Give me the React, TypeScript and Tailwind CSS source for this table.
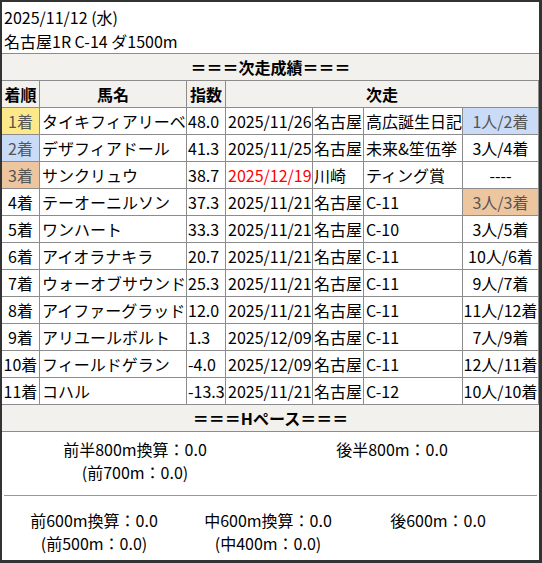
import React from "react";

type Row = {
  rank: string;
  rankBg?: string;
  name: string;
  score: string;
  date: string;
  dateRed?: boolean;
  venue: string;
  race: string;
  result: string;
  resultBg?: string;
};

const rows: Row[] = [
  { rank: "1着", rankBg: "bg-[#fde98a] text-[#555]", name: "タイキフィアリーベ", score: "48.0", date: "2025/11/26", venue: "名古屋", race: "高広誕生日記", result: "1人/2着", resultBg: "bg-[#c9dbf6] text-[#555]" },
  { rank: "2着", rankBg: "bg-[#c9dbf6] text-[#555]", name: "デザフィアドール", score: "41.3", date: "2025/11/25", venue: "名古屋", race: "未来&笙伍挙", result: "3人/4着" },
  { rank: "3着", rankBg: "bg-[#edc6a0] text-[#555]", name: "サンクリュウ", score: "38.7", date: "2025/12/19", dateRed: true, venue: "川崎", race: "ティング賞", result: "----" },
  { rank: "4着", name: "テーオーニルソン", score: "37.3", date: "2025/11/21", venue: "名古屋", race: "C-11", result: "3人/3着", resultBg: "bg-[#edc6a0] text-[#555]" },
  { rank: "5着", name: "ワンハート", score: "33.3", date: "2025/11/21", venue: "名古屋", race: "C-10", result: "3人/5着" },
  { rank: "6着", name: "アイオラナキラ", score: "20.7", date: "2025/11/21", venue: "名古屋", race: "C-11", result: "10人/6着" },
  { rank: "7着", name: "ウォーオブサウンド", score: "25.3", date: "2025/11/21", venue: "名古屋", race: "C-11", result: "9人/7着" },
  { rank: "8着", name: "アイファーグラッド", score: "12.0", date: "2025/11/21", venue: "名古屋", race: "C-11", result: "11人/12着" },
  { rank: "9着", name: "アリユールボルト", score: "1.3", date: "2025/12/09", venue: "名古屋", race: "C-11", result: "7人/9着" },
  { rank: "10着", name: "フィールドゲラン", score: "-4.0", date: "2025/12/09", venue: "名古屋", race: "C-11", result: "12人/11着" },
  { rank: "11着", name: "コハル", score: "-13.3", date: "2025/11/21", venue: "名古屋", race: "C-12", result: "10人/10着" },
];

const cell = "h-[26px] leading-[26px] whitespace-nowrap overflow-hidden";

export default function App() {
  return (
    <div
      className="w-[542px] h-[563px] bg-white border-l-2 border-t-2 border-r-[3px] border-b-[3px] border-[#333] text-[16px] text-black overflow-hidden"
      style={{ fontFamily: '"Noto Sans CJK JP", "Noto Sans", sans-serif' }}
    >
      <div className="h-[51px] pt-[3px] pl-[2px] leading-[24px]">
        <div>2025/11/12 (水)</div>
        <div>名古屋1R C-14 ダ1500m</div>
      </div>

      <div className="h-[27px] leading-[26px] border-t border-[#8c8c8c] bg-[#f2f1ed] text-center font-bold">
        ＝＝＝次走成績＝＝＝
      </div>

      <div className="grid grid-cols-[37px_146px_38px_86px_50px_98px_75px] gap-px bg-[#8c8c8c] border-t border-b border-r border-[#8c8c8c]">
        <div className={`${cell} bg-[#f2f1ed] font-bold text-center`}>着順</div>
        <div className={`${cell} bg-[#f2f1ed] font-bold text-center`}>馬名</div>
        <div className={`${cell} bg-[#f2f1ed] font-bold text-center`}>指数</div>
        <div className={`${cell} col-span-4 bg-[#f2f1ed] font-bold text-center`}>次走</div>
        {rows.map((r, i) => (
          <React.Fragment key={i}>
            <div className={`${cell} text-center ${r.rankBg ?? "bg-white"}`}>{r.rank}</div>
            <div className={`${cell} bg-white pl-[2px]`}>{r.name}</div>
            <div className={`${cell} bg-white pl-px`}>{r.score}</div>
            <div className={`${cell} bg-white pl-[2px] ${r.dateRed ? "text-[#f00]" : ""}`}>{r.date}</div>
            <div className={`${cell} bg-white pl-px`}>{r.venue}</div>
            <div className={`${cell} bg-white pl-[2px]`}>{r.race}</div>
            <div className={`${cell} text-center ${r.resultBg ?? "bg-white"}`}>{r.result}</div>
          </React.Fragment>
        ))}
      </div>

      <div className="h-[27px] leading-[27px] bg-[#f2f1ed] text-center font-bold border-b border-[#8c8c8c]">
        ＝＝＝Hペース＝＝＝
      </div>

      <div className="h-[63px] pt-[6px] pl-[3px] leading-[23px] grid grid-cols-[260px_254px]">
        <div className="text-center">
          <div>前半800m換算：0.0</div>
          <div>(前700m：0.0)</div>
        </div>
        <div className="text-center">
          <div>後半800m：0.0</div>
        </div>
      </div>
      <div className="mx-[2px] border-t border-[#999]" />
      <div className="pt-[13px] pl-[2px] leading-[23px] grid grid-cols-[180px_168px_172px]">
        <div className="text-center">
          <div>前600m換算：0.0</div>
          <div>(前500m：0.0)</div>
        </div>
        <div className="text-center">
          <div>中600m換算：0.0</div>
          <div>(中400m：0.0)</div>
        </div>
        <div className="text-center">
          <div>後600m：0.0</div>
        </div>
      </div>
    </div>
  );
}
